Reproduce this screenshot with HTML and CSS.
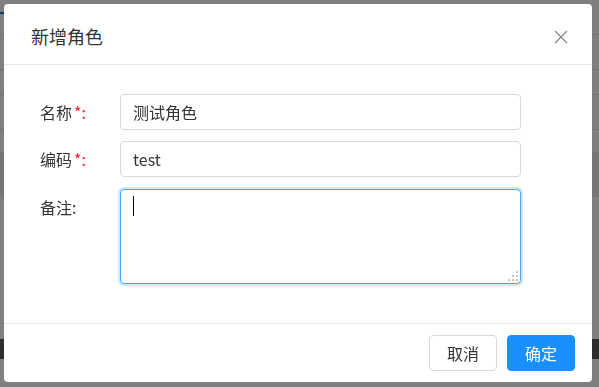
FILE: index.html
```html
<!DOCTYPE html>
<html lang="zh-CN">
<head>
  <meta charset="UTF-8">
  <title>新增角色</title>
  <link rel="stylesheet" href="styles.css">
</head>
<body>
  <div class="page">
    <div class="topbar"><span class="tab-mark"></span></div>
    <div class="row"></div>
    <div class="row short"></div>
    <div class="row"></div>
    <div class="row gap"></div>
    <div class="row shade"></div>
    <div class="spacer"></div>
    <div class="footer-bar"></div>
  </div>

  <div class="mask"></div>

  <div class="modal-wrap">
    <div class="modal">
      <div class="modal-header">
        <div class="modal-title">新增角色</div>
        <svg class="close" width="14" height="14" viewBox="0 0 14 14">
          <path d="M1 1 L13 13 M13 1 L1 13" stroke="#8c8c8c" stroke-width="1.4" fill="none"/>
        </svg>
      </div>

      <div class="modal-body">
        <div class="form-row">
          <label class="label">名称<span class="req">*:</span></label>
          <input class="input" type="text" value="测试角色">
        </div>
        <div class="form-row">
          <label class="label">编码<span class="req">*:</span></label>
          <input class="input" type="text" value="test">
        </div>
        <div class="form-row">
          <label class="label">备注:</label>
          <div class="textarea-box">
            <textarea class="textarea focused"></textarea>
            <span class="caret"></span>
            <svg class="grip" width="11" height="11" viewBox="0 0 11 11">
              <rect x="8" y="0" width="2" height="2" fill="#c4c4c4"/>
              <rect x="4" y="4" width="2" height="2" fill="#c4c4c4"/>
              <rect x="8" y="4" width="2" height="2" fill="#c4c4c4"/>
              <rect x="0" y="8" width="2" height="2" fill="#c4c4c4"/>
              <rect x="4" y="8" width="2" height="2" fill="#c4c4c4"/>
              <rect x="8" y="8" width="2" height="2" fill="#c4c4c4"/>
            </svg>
          </div>
        </div>
      </div>

      <div class="modal-footer">
        <button class="btn">取消</button>
        <button class="btn btn-primary">确定</button>
      </div>
    </div>
  </div>
</body>
</html>
```

FILE: styles.css
```css
body { margin: 0; font-family: "Noto Sans CJK SC", "Noto Sans", sans-serif; color: #333; }

/* page behind the dialog */
.page { background: #fff; height: 387px; display: flex; flex-direction: column; }
.topbar { height: 35px; border-bottom: 1px solid #e4e4e4; box-sizing: border-box; position: relative; }
.tab-mark { position: absolute; left: 0; top: 12px; width: 6px; height: 2px; background: #1f6fd0; }
.row { height: 35px; border-bottom: 1px solid #e4e4e4; box-sizing: border-box; }
.row.short { height: 25px; }
.row.gap { height: 22px; border-bottom: none; }
.row.shade { height: 45px; background: #ececec; border-bottom: none; }
.spacer { height: 142px; }
.footer-bar { height: 20px; background: #5a5a5a; }

.mask { position: fixed; inset: 0; background: rgba(0, 0, 0, 0.5); }

.modal-wrap { position: fixed; inset: 0; padding: 4px 0 0 4px; }
.modal { width: 588px; background: #fff; border-radius: 4px; }

.modal-header { padding: 3px 24px 0 27px; box-sizing: content-box; height: 57px; border-bottom: 1px solid #e8e8e8; display: flex; align-items: center; justify-content: space-between; }
.modal-title { font-size: 18px; line-height: 24px; color: #333; }
.close { display: block; margin-top: 2px; }

.modal-body { padding: 29px 0 39px 36px; display: flex; flex-direction: column; gap: 11px; }
.form-row { display: grid; grid-template-columns: 80px 401px; align-items: center; }
.form-row:last-child { align-items: start; margin-top: 1px; }
.label { font-size: 16px; line-height: 36px; color: #333; }
.req { color: #f5222d; margin-left: 2px; }

.input { height: 36px; box-sizing: border-box; border: 1px solid #d9d9d9; border-radius: 4px; padding: 0 12px; font: inherit; font-size: 16px; color: #333; outline: none; }

.textarea-box { position: relative; height: 95px; }
.textarea { width: 100%; height: 95px; box-sizing: border-box; border: 1px solid #d9d9d9; border-radius: 4px; resize: none; outline: none; font: inherit; font-size: 16px; display: block; }
.textarea.focused { border-color: #40a9ff; box-shadow: 0 0 0 2px rgba(24, 144, 255, 0.2); }
.caret { position: absolute; left: 13px; top: 7px; width: 1px; height: 20px; background: #000; }
.grip { position: absolute; right: 2px; bottom: 2px; }

.modal-footer { border-top: 1px solid #e8e8e8; padding: 11px 17px 11px 0; display: flex; justify-content: flex-end; gap: 10px; }
.btn { width: 68px; height: 36px; border: 1px solid #d9d9d9; border-radius: 4px; background: #fff; font: inherit; font-size: 16px; color: #333; padding: 0; }
.btn-primary { background: #1890ff; border-color: #1890ff; color: #fff; }
```
